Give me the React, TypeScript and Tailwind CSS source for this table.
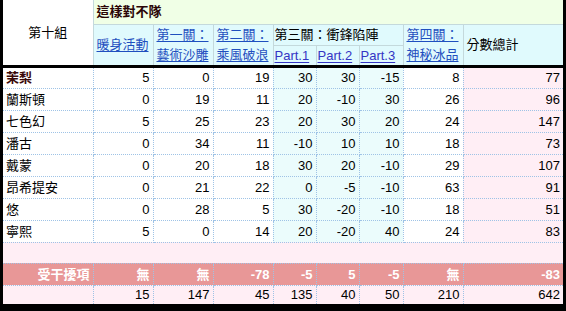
import React from "react";

type Row = { name: string; v: number[]; bold?: boolean };

const rows: Row[] = [
  { name: "茉梨", v: [5, 0, 19, 30, 30, -15, 8, 77], bold: true },
  { name: "蘭斯頓", v: [0, 19, 11, 20, -10, 30, 26, 96] },
  { name: "七色幻", v: [5, 25, 23, 20, 30, 20, 24, 147] },
  { name: "潘古", v: [0, 34, 11, -10, 10, 10, 18, 73] },
  { name: "戴蒙", v: [0, 20, 18, 30, 20, -10, 29, 107] },
  { name: "昂希提安", v: [0, 21, 22, 0, -5, -10, 63, 91] },
  { name: "悠", v: [0, 28, 5, 30, -20, -10, 18, 51] },
  { name: "寧熙", v: [5, 0, 14, 20, -20, 40, 24, 83] },
];

const penalty = ["無", "無", "-78", "-5", "5", "-5", "無", "-83"];
const totals = [15, 147, 45, 135, 40, 50, 210, 642];

const dot = "border border-dotted border-[#9fc3e6]";
const head = "border border-solid border-[#c4d9dc]";
const link = "text-[#1f4fbf] underline underline-offset-2 decoration-1";

const cellBg = (i: number) =>
  i >= 3 && i <= 5 ? "bg-[#ebfcfc]" : i === 7 ? "bg-[#ffeef5]" : "bg-white";

export default function App() {
  return (
    <div
      className="w-[566px] h-[311px] bg-black pl-[3px] pr-[3px] pb-[6px] overflow-hidden"
      style={{ fontFamily: '"Liberation Sans", "Noto Sans CJK TC", sans-serif' }}
    >
      <table className="w-[560px] border-collapse table-fixed text-[13px] leading-none text-black bg-white">
        <colgroup>
          <col className="w-[90px]" />
          <col className="w-[60px]" />
          <col className="w-[60px]" />
          <col className="w-[60px]" />
          <col className="w-[43px]" />
          <col className="w-[43px]" />
          <col className="w-[44px]" />
          <col className="w-[60px]" />
          <col className="w-[100px]" />
        </colgroup>
        <thead>
          <tr className="h-[24px]">
            <th rowSpan={3} className={`${head} border-l-0 border-t-0 bg-white font-normal text-center`}>
              第十組
            </th>
            <th colSpan={8} className={`${head} border-t-0 border-r-0 bg-[#f0ffe6] text-left pl-[3px] font-bold text-[#2a0505]`}>
              這樣對不隊
            </th>
          </tr>
          <tr className="h-[21px]">
            <th rowSpan={2} className={`${head} bg-[#e0fafd] font-normal text-left pl-[3px]`}>
              <span className={link}>暖身活動</span>
            </th>
            <th rowSpan={2} className={`${head} bg-[#e0fafd] font-normal text-left pl-[3px] leading-[20px]`}>
              <span className={link}>第一關：</span>
              <br />
              <span className={link}>藝術沙雕</span>
            </th>
            <th rowSpan={2} className={`${head} bg-[#e0fafd] font-normal text-left pl-[3px] leading-[20px]`}>
              <span className={link}>第二關：</span>
              <br />
              <span className={link}>乘風破浪</span>
            </th>
            <th colSpan={3} className={`${head} bg-[#e0fafd] font-normal text-left pl-[1px]`}>
              第三關：衝鋒陷陣
            </th>
            <th rowSpan={2} className={`${head} bg-[#e0fafd] font-normal text-left pl-[3px] leading-[20px]`}>
              <span className={link}>第四關：</span>
              <br />
              <span className={link}>神秘冰品</span>
            </th>
            <th rowSpan={2} className={`${head} border-r-0 bg-[#e0fafd] font-normal text-left pl-[3px]`}>
              分數總計
            </th>
          </tr>
          <tr className="h-[20px] border-b-[3px] border-solid border-b-black">
            {["Part.1", "Part.2", "Part.3"].map((p) => (
              <th key={p} className={`${head} border-b-[3px] border-b-black bg-[#e0fafd] font-normal text-left pl-[1px]`}>
                <span className="text-[#3434c4] underline underline-offset-2 decoration-1">{p}</span>
              </th>
            ))}
          </tr>
        </thead>
        <tbody>
          {rows.map((r, ri) => (
            <tr key={r.name} className="h-[22px]">
              <td className={`${dot} border-l-0 ${ri === 0 ? "border-t-0" : ""} text-left pl-[3px] ${r.bold ? "font-bold text-[#3a0808]" : ""}`}>
                {r.name}
              </td>
              {r.v.map((n, i) => (
                <td
                  key={i}
                  className={`${dot} ${ri === 0 ? "border-t-0" : ""} ${i === 7 ? "border-r-0" : ""} ${cellBg(i)} text-right pr-[3px]`}
                >
                  {n}
                </td>
              ))}
            </tr>
          ))}
          <tr className="h-[21px] bg-[#ffeef5]">
            <td colSpan={9} className={`${dot} border-x-0`} />
          </tr>
          <tr className="h-[22px] bg-[#e89797] text-white font-bold">
            <td className={`${dot} border-l-0 text-right pr-[3px]`}>受干擾項</td>
            {penalty.map((p, i) => (
              <td key={i} className={`${dot} ${i === 7 ? "border-r-0" : ""} text-right pr-[3px]`}>
                {p}
              </td>
            ))}
          </tr>
          <tr className="h-[19px] bg-[#ffeef5]">
            <td className={`${dot} border-l-0 border-b-0`} />
            {totals.map((t, i) => (
              <td key={i} className={`${dot} border-b-0 ${i === 7 ? "border-r-0" : ""} text-right pr-[3px]`}>
                {t}
              </td>
            ))}
          </tr>
        </tbody>
      </table>
    </div>
  );
}
